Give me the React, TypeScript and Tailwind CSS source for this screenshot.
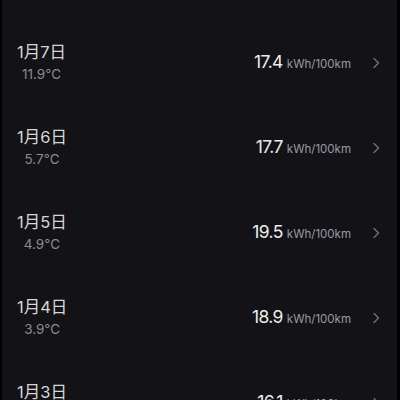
import React from 'react';

interface DayRow {
  date: string;
  temp: string;
  value: string;
}

const rows: DayRow[] = [
  { date: '1月7日', temp: '11.9°C', value: '17.4' },
  { date: '1月6日', temp: '5.7°C', value: '17.7' },
  { date: '1月5日', temp: '4.9°C', value: '19.5' },
  { date: '1月4日', temp: '3.9°C', value: '18.9' },
  { date: '1月3日', temp: '2.1°C', value: '16.1' },
];

const Chevron: React.FC = () => (
  <svg width="9" height="12" viewBox="0 0 9 12" fill="none">
    <path d="M2 1.5 L6.5 6 L2 10.5" stroke="#6c6c71" strokeWidth="1.5" strokeLinecap="round" strokeLinejoin="round" />
  </svg>
);

const App: React.FC = () => {
  return (
    <div
      className="w-[400px] h-[400px] overflow-hidden bg-black pl-[2px] pr-[3px]"
      style={{ fontFamily: 'Inter, "Noto Sans CJK SC", sans-serif' }}
    >
      <div className="h-full bg-[#131317] pt-[20px]">
        {rows.map((row) => (
          <div key={row.date} className="h-[85px] flex items-center pl-[15px] pr-[16px]">
            <div className="flex flex-col items-center">
              <span className="text-[16.5px] leading-[20px] text-[#d6d6d8]">{row.date}</span>
              <span className="text-[13.5px] leading-[18px] mt-[3px] text-[#8b8b90]">{row.temp}</span>
            </div>
            <div className="ml-auto flex items-baseline">
              <span className="text-[17.5px] tracking-[-0.6px] text-[#ececee]">{row.value}</span>
              <span className="ml-[4px] text-[11.5px] text-[#9a9a9f]">kWh/100km</span>
            </div>
            <div className="ml-[21px] flex items-center">
              <Chevron />
            </div>
          </div>
        ))}
      </div>
    </div>
  );
};

export default App;
